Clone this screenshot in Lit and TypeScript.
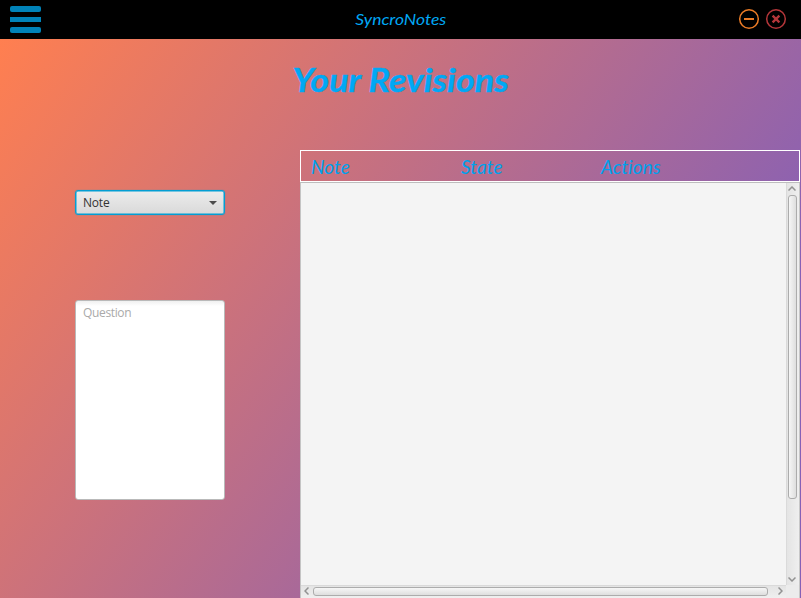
import { LitElement, html, css, svg } from "lit";
import { customElement } from "lit/decorators.js";

const chevron = (d: string, w: number, h: number) => html`
  <svg width=${w} height=${h} viewBox="0 0 ${w} ${h}">
    ${svg`<path d=${d} fill="none" stroke="#929292" stroke-width="1.5" />`}
  </svg>`;

@customElement("app-root")
export class AppRoot extends LitElement {
  static styles = css`
    * { box-sizing: border-box; }
    :host {
      display: flex;
      flex-direction: column;
      width: 801px;
      height: 598px;
      overflow: hidden;
      border-right: 1px solid #2a2630;
      background: #000;
      font-family: "Open Sans", "Noto Sans", sans-serif;
    }
    svg { display: block; flex: none; }
    .bar {
      flex: none;
      height: 39px;
      display: grid;
      grid-template-columns: 1fr auto 1fr;
      align-items: center;
      padding: 0 14px 0 10px;
      background: #000;
    }
    .burger { display: flex; flex-direction: column; gap: 5px; width: 31px; }
    .burger i { height: 6px; border-radius: 2px; background: #0082b8; }
    .burger i:nth-child(2) { height: 5px; border-radius: 0; }
    .app {
      padding-bottom: 2px;
      margin-left: 4px;
      font: italic 15.7px/20px Lato, sans-serif;
      color: #00a8f5;
      transform: scaleX(1.115);
    }
    .controls { display: flex; gap: 7px; justify-content: flex-end; padding: 0 0 1px; }
    .controls svg { overflow: visible; }
    .body {
      flex: 1;
      min-height: 0;
      display: flex;
      flex-direction: column;
      background: linear-gradient(125deg, #ff7f50 0px, #8660b6 790px);
    }
    h1 {
      margin: 0;
      height: 111px;
      padding-top: 20px;
      text-align: center;
      font: italic bold 33px/40px Lato, sans-serif;
      color: #00a8f5;
      -webkit-text-stroke: 0.4px #00a8f5;
      transform: scaleX(1.09);
    }
    .content { flex: 1; min-height: 0; display: flex; }
    .form { width: 300px; padding: 40px 75px 0; }
    .combo {
      height: 25px;
      display: flex;
      align-items: center;
      justify-content: space-between;
      padding: 0 7px 0 7px;
      border: 1px solid #039ed3;
      border-radius: 3px;
      background: linear-gradient(#ececec, #d9d9d9);
      box-shadow: inset 0 0 0 0.5px #039ed3, 0 0 1px #039ed3;
      font-size: 12px;
      letter-spacing: -0.2px;
      color: #333;
    }
    .area {
      margin-top: 85px;
      height: 200px;
      padding: 3px 7px;
      border: 1px solid #b9b9b9;
      border-radius: 3px;
      background: linear-gradient(#f0f0f0, #fff 5px);
      font-size: 12px;
      line-height: 17px;
      letter-spacing: -0.35px;
      color: #aaa;
    }
    .table { width: 500px; display: flex; flex-direction: column; }
    .head {
      flex: none;
      height: 32px;
      display: grid;
      grid-template-columns: 150px 140px 1fr;
      padding-left: 10px;
      border: 1px solid #fff;
      font: italic 19px/32px Lato, sans-serif;
      letter-spacing: 0.1px;
      color: #00a0ec;
    }
    .scroll {
      flex: 1;
      min-height: 0;
      display: grid;
      grid-template-columns: 1fr 14px;
      grid-template-rows: 1fr 13px;
      border-top: 1px solid #bdbdbd;
      border-left: 1px solid #c4c4c4;
      background: #f4f4f4;
    }
    .vbar {
      display: flex;
      flex-direction: column;
      align-items: center;
      padding: 3px 2px 3px 0;
      border-left: 1px solid #dadada;
      border-right: 1px solid #c8c8c8;
      background: linear-gradient(90deg, #e4e4e4, #efefef);
    }
    .vthumb {
      width: 9px;
      height: 304px;
      margin: 4px 0 auto 1px;
      border: 1px solid #acacac;
      border-radius: 3px;
      background: linear-gradient(90deg, #f6f6f6, #dedede);
    }
    .hbar {
      display: flex;
      align-items: center;
      padding: 0 3px 2px 3px;
      border-top: 1px solid #dadada;
      background: linear-gradient(#e4e4e4, #efefef);
    }
    .hthumb {
      width: 455px;
      height: 9px;
      margin: 0 auto 0 4px;
      border: 1px solid #acacac;
      border-radius: 3px;
      background: linear-gradient(#f6f6f6, #dedede);
    }
    .corner { background: #ececec; border-right: 1px solid #c8c8c8; }
  `;

  render() {
    return html`
      <header class="bar">
        <div class="burger"><i></i><i></i><i></i></div>
        <span class="app">SyncroNotes</span>
        <div class="controls">
          <svg width="20" height="20" viewBox="0 0 20 20" fill="none" stroke="#ec7c26">
            <circle cx="9" cy="10" r="9.3" stroke-width="1.5" />
            <path d="M4 10H14" stroke-width="2" />
          </svg>
          <svg width="20" height="20" viewBox="0 0 20 20" fill="none" stroke="#b5363a">
            <circle cx="9" cy="10" r="9.3" stroke-width="1.5" />
            <path d="M5.6 6.6L12.4 13.4M12.4 6.6L5.6 13.4" stroke-width="2.3" />
          </svg>
        </div>
      </header>
      <main class="body">
        <h1>Your Revisions</h1>
        <div class="content">
          <section class="form">
            <div class="combo">
              <span>Note</span>
              <svg width="8" height="4" viewBox="0 0 8 4"><path d="M0 0H8L4 4Z" fill="#4c4c4c" /></svg>
            </div>
            <div class="area">Question</div>
          </section>
          <section class="table">
            <div class="head"><span>Note</span><span>State</span><span>Actions</span></div>
            <div class="scroll">
              <div></div>
              <div class="vbar">
                ${chevron("M0.5 4.5L4 1L7.5 4.5", 8, 5)}
                <div class="vthumb"></div>
                ${chevron("M0.5 0.5L4 4L7.5 0.5", 8, 5)}
              </div>
              <div class="hbar">
                ${chevron("M4.5 0.5L1 4L4.5 7.5", 5, 8)}
                <div class="hthumb"></div>
                ${chevron("M0.5 0.5L4 4L0.5 7.5", 5, 8)}
              </div>
              <div class="corner"></div>
            </div>
          </section>
        </div>
      </main>
    `;
  }
}
